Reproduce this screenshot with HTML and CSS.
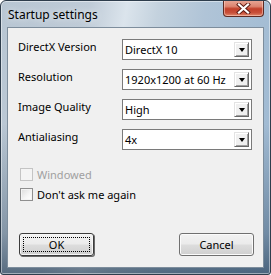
FILE: index.html
```html
<!DOCTYPE html>
<html>
<head>
<meta charset="utf-8">
<link rel="stylesheet" href="styles.css">
</head>
<body>
<div class="window">
  <div class="titlebar">
    <span class="title">Startup settings</span>
    <div class="close">
      <svg width="15" height="11" viewBox="0 0 15 11">
        <path d="M3 1.5 L12 9.5 M12 1.5 L3 9.5" stroke="#5a1a12" stroke-width="4" stroke-linecap="square"/>
        <path d="M3 1.5 L12 9.5 M12 1.5 L3 9.5" stroke="#ffffff" stroke-width="2.2" stroke-linecap="square"/>
      </svg>
    </div>
  </div>
  <div class="client">
    <div class="form">
      <span class="label">DirectX Version</span>
      <div class="combo"><span class="value">DirectX 10</span><span class="drop"><span class="arrow"></span></span></div>
      <span class="label">Resolution</span>
      <div class="combo"><span class="value">1920x1200 at 60 Hz</span><span class="drop"><span class="arrow"></span></span></div>
      <span class="label">Image Quality</span>
      <div class="combo"><span class="value">High</span><span class="drop"><span class="arrow"></span></span></div>
      <span class="label">Antialiasing</span>
      <div class="combo"><span class="value">4x</span><span class="drop"><span class="arrow"></span></span></div>
    </div>
    <div class="checks">
      <div class="check disabled"><span class="box"></span><span>Windowed</span></div>
      <div class="check"><span class="box"></span><span>Don't ask me again</span></div>
    </div>
    <div class="buttons">
      <div class="btn default"><span class="focus">OK</span></div>
      <div class="btn">Cancel</div>
    </div>
  </div>
</div>
</body>
</html>
```
FILE: styles.css
```css
html, body {
  margin: 0;
  padding: 0;
  background: #ffffff;
}
body {
  font-family: "Noto Sans", "Open Sans", sans-serif;
  font-size: 11px;
  color: #000;
}
.window {
  box-sizing: border-box;
  width: 271px;
  height: 275px;
  border: 1px solid #2e3d4c;
  border-radius: 6px 6px 3px 3px;
  display: flex;
  flex-direction: column;
  background:
    linear-gradient(to bottom, rgba(0,0,0,0) 45%, rgba(30,55,80,0.35) 85%, rgba(20,45,70,0.6) 100%),
    linear-gradient(100deg, #b8c6d3 0%, #bfcbd7 28%, #dbe4ec 40%, #c4d2de 50%, #b0c4d7 65%, #a4bdd4 85%, #9db8d2 100%);
  box-shadow: inset 0 0 0 1px rgba(255,255,255,0.45);
  overflow: hidden;
}
.titlebar {
  height: 26px;
  flex: none;
  display: flex;
  align-items: flex-start;
  justify-content: space-between;
  padding: 0 6px 0 7px;
}
.title {
  font-size: 12px;
  line-height: 14px;
  margin-top: 7px;
  color: #000;
  text-shadow: 0 0 6px rgba(255,255,255,0.9);
}
.close {
  width: 41px;
  height: 17px;
  box-sizing: border-box;
  margin-top: -1px;
  border: 1px solid #5e2a22;
  border-top: none;
  border-radius: 0 0 4px 4px;
  background: linear-gradient(to bottom, #e9a998 0%, #dc8470 40%, #c2402a 55%, #c8503a 80%, #e28a6c 100%);
  box-shadow: inset 0 0 0 1px rgba(255,220,210,0.5);
  display: flex;
  align-items: center;
  justify-content: center;
}
.client {
  flex: 1;
  margin: 0 6px 6px 6px;
  border: 1px solid #7d8d9c;
  background: #f0f0f0;
  display: flex;
  flex-direction: column;
}
.form {
  display: grid;
  grid-template-columns: 104px 130px;
  grid-auto-rows: 21px;
  row-gap: 9px;
  padding: 11px 0 0 10px;
  align-items: center;
}
.label {
  margin-top: -5px;
  line-height: 14px;
}
.combo {
  box-sizing: border-box;
  height: 21px;
  border: 1px solid #7a7a7a;
  background: #fff;
  display: flex;
  align-items: center;
  justify-content: space-between;
  padding: 0 2px 0 2px;
}
.value {
  line-height: 14px;
}
.drop {
  box-sizing: border-box;
  width: 15px;
  height: 15px;
  background: #f0f0f0;
  border-top: 1px solid #e3e3e3;
  border-left: 1px solid #e3e3e3;
  border-right: 1px solid #696969;
  border-bottom: 1px solid #696969;
  box-shadow: inset 1px 1px 0 #ffffff, inset -1px -1px 0 #a0a0a0;
  display: flex;
  align-items: center;
  justify-content: center;
}
.arrow {
  width: 0;
  height: 0;
  border-left: 3.5px solid transparent;
  border-right: 3.5px solid transparent;
  border-top: 4px solid #000;
  margin-left: 1px;
}
.checks {
  display: flex;
  flex-direction: column;
  gap: 7px;
  padding: 18px 0 0 12px;
}
.check {
  display: flex;
  align-items: center;
  gap: 4px;
  height: 13px;
  line-height: 14px;
}
.box {
  box-sizing: border-box;
  width: 13px;
  height: 13px;
  border: 1px solid #8f8f8f;
  background: linear-gradient(135deg, #dcdcdc 0%, #f6f6f6 60%, #ffffff 100%);
  box-shadow: inset 0 0 0 1px #f4f4f4;
}
.check.disabled {
  color: #a0a0a0;
}
.check.disabled .box {
  border-color: #c4c4c4;
  background: #f4f4f4;
}
.buttons {
  display: flex;
  justify-content: space-between;
  padding: 32px 9px 0 11px;
}
.btn {
  box-sizing: border-box;
  width: 75px;
  height: 23px;
  border: 1px solid #707070;
  border-radius: 3px;
  background: linear-gradient(to bottom, #f2f2f2 0%, #ebebeb 48%, #dddddd 52%, #cfcfcf 100%);
  box-shadow: inset 0 0 0 1px #fbfbfb;
  display: flex;
  align-items: center;
  justify-content: center;
  line-height: 14px;
}
.btn.default {
  border-color: #3c3c3c;
  box-shadow: inset 0 0 0 1px #f6f6f6, 1px 1px 0 #6a6a6a;
  padding: 3px;
}
.focus {
  box-sizing: border-box;
  width: 100%;
  height: 100%;
  border: 1px dotted #000;
  display: flex;
  align-items: center;
  justify-content: center;
}
```
